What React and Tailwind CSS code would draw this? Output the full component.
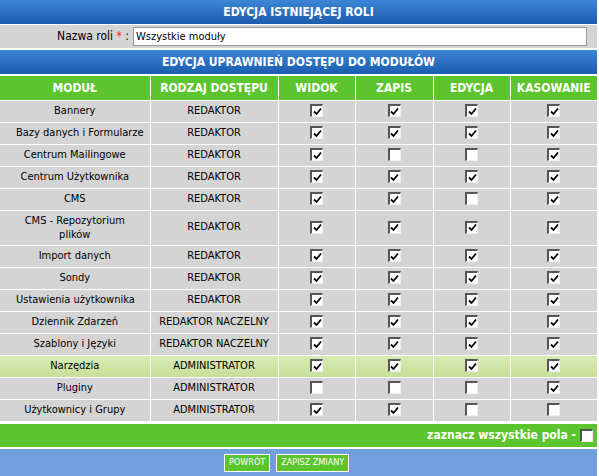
import React from "react";

const rows = [
  ["Bannery", "REDAKTOR", [1, 1, 1, 1]],
  ["Bazy danych i Formularze", "REDAKTOR", [1, 1, 1, 1]],
  ["Centrum Mailingowe", "REDAKTOR", [1, 0, 0, 1]],
  ["Centrum Użytkownika", "REDAKTOR", [1, 1, 1, 1]],
  ["CMS", "REDAKTOR", [1, 1, 0, 1]],
  ["CMS - Repozytorium plików", "REDAKTOR", [1, 1, 1, 1], true],
  ["Import danych", "REDAKTOR", [1, 1, 1, 1]],
  ["Sondy", "REDAKTOR", [1, 1, 1, 1]],
  ["Ustawienia użytkownika", "REDAKTOR", [1, 1, 1, 1]],
  ["Dziennik Zdarzeń", "REDAKTOR NACZELNY", [1, 1, 1, 1]],
  ["Szablony i Języki", "REDAKTOR NACZELNY", [1, 1, 1, 1]],
  ["Narzędzia", "ADMINISTRATOR", [1, 1, 1, 1]],
  ["Pluginy", "ADMINISTRATOR", [0, 0, 0, 1]],
  ["Użytkownicy i Grupy", "ADMINISTRATOR", [1, 1, 0, 0]],
];

function Box({ on }) {
  return (
    <span className="inline-flex items-center justify-center w-[13px] h-[13px] bg-white border-t-2 border-l-2 border-[#555] border-r border-b border-r-[#eee] border-b-[#eee] align-middle">
      {on ? (
        <svg width="9" height="9" viewBox="0 0 9 9">
          <path d="M1 4.5 L3.5 7 L8 1.5" stroke="#000" strokeWidth="1.8" fill="none" />
        </svg>
      ) : null}
    </span>
  );
}

const blueBar = "bg-gradient-to-b from-[#3d86d6] to-[#1a5cae] text-white font-bold text-[12px] text-center";

export default function App() {
  return (
    <div className="w-[599px] h-[476px] overflow-hidden bg-white text-[11px] text-black" style={{ fontFamily: "'DejaVu Sans Condensed', 'Liberation Sans', sans-serif" }}>
      <div className={`${blueBar} h-[24px] leading-[24px] w-[597px]`}>EDYCJA ISTNIEJĄCEJ ROLI</div>
      <div className="flex h-[24px] w-[597px] bg-[#d4d4d4] border-t border-white">
        <div className="w-[133px] text-right pr-1 leading-[22px] text-[12px]">
          Nazwa roli <span className="text-[#f22]">*</span> :
        </div>
        <div className="flex-1 pr-[10px] pt-[2px]">
          <div className="h-[19px] bg-white border border-[#999] text-[11px] leading-[17px] px-[2px]">Wszystkie moduły</div>
        </div>
      </div>
      <div className={`${blueBar} h-[24px] leading-[24px] w-[597px] mt-[2px]`}>EDYCJA UPRAWNIEŃ DOSTĘPU DO MODUŁÓW</div>
      <table className="w-[597px] border-collapse mt-[2px] table-fixed">
        <colgroup>
          <col className="w-[150px]" />
          <col className="w-[128px]" />
          <col className="w-[77px]" />
          <col className="w-[78px]" />
          <col className="w-[77px]" />
          <col className="w-[87px]" />
        </colgroup>
        <thead>
          <tr className="bg-[#5cc42c] text-white text-[12px] h-[24px]">
            {["MODUŁ", "RODZAJ DOSTĘPU", "WIDOK", "ZAPIS", "EDYCJA", "KASOWANIE"].map((h) => (
              <th key={h} className="border border-white border-t-0 first:border-l-0 last:border-r-0 font-bold whitespace-nowrap">{h}</th>
            ))}
          </tr>
        </thead>
        <tbody>
          {rows.map(([name, role, checks, tall]) => (
            <tr key={name} className={`${name === "Narzędzia" ? "bg-gradient-to-b from-[#d9eab5] to-[#c6df98]" : "bg-[#d4d4d4]"} ${tall ? "h-[35px]" : "h-[22px]"} text-center`}>
              <td className={`border border-white border-l-0 px-4 leading-[14px] ${tall ? "" : "whitespace-nowrap"}`}>{name}</td>
              <td className="border border-white whitespace-nowrap">{role}</td>
              {checks.map((c, i) => (
                <td key={i} className="border border-white last:border-r-0"><Box on={c} /></td>
              ))}
            </tr>
          ))}
        </tbody>
      </table>
      <div className="w-[597px] h-[23px] mt-[2px] bg-[#5cc42c] text-white font-bold text-[12px] flex items-center justify-end gap-1 pr-[4px]">
        zaznacz wszystkie pola - <Box on={0} />
      </div>
      <div className="w-[597px] h-[29px] mt-[2px] bg-[#6fa0dd] flex items-center pl-[224px] gap-[6px]">
        <button className="bg-[#5cc42c] border border-white text-white text-[9px] h-[18px] px-[4px]">POWRÓT</button>
        <button className="bg-[#5cc42c] border border-white text-white text-[9px] h-[18px] px-[4px]">ZAPISZ ZMIANY</button>
      </div>
    </div>
  );
}
